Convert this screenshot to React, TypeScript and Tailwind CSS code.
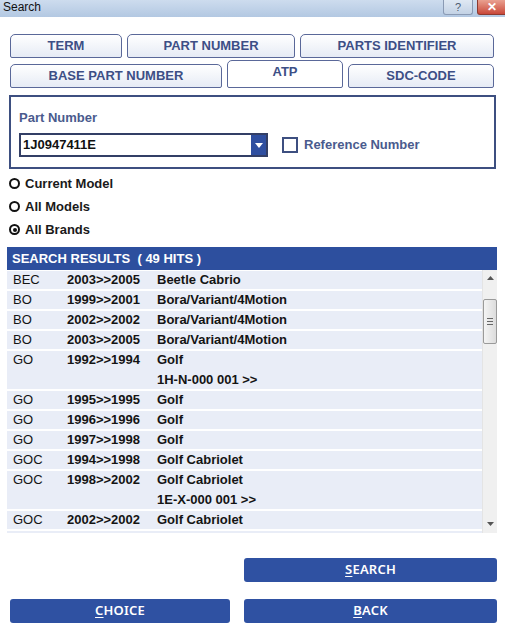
import React from "react";

type Row = { code: string; years: string; name: string; extra?: string };

const rows: Row[] = [
  { code: "BEC", years: "2003>>2005", name: "Beetle Cabrio" },
  { code: "BO", years: "1999>>2001", name: "Bora/Variant/4Motion" },
  { code: "BO", years: "2002>>2002", name: "Bora/Variant/4Motion" },
  { code: "BO", years: "2003>>2005", name: "Bora/Variant/4Motion" },
  { code: "GO", years: "1992>>1994", name: "Golf", extra: "1H-N-000 001 >>" },
  { code: "GO", years: "1995>>1995", name: "Golf" },
  { code: "GO", years: "1996>>1996", name: "Golf" },
  { code: "GO", years: "1997>>1998", name: "Golf" },
  { code: "GOC", years: "1994>>1998", name: "Golf Cabriolet" },
  { code: "GOC", years: "1998>>2002", name: "Golf Cabriolet", extra: "1E-X-000 001 >>" },
  { code: "GOC", years: "2002>>2002", name: "Golf Cabriolet" },
];

function Tab({ label, w, active }: { label: string; w: string; active?: boolean }) {
  return (
    <div
      className={`${w} ${
        active ? "h-[28px] bg-white" : "h-[24px] bg-gradient-to-b from-white to-[#e6ebf5]"
      } flex items-center justify-center border border-[#5a6899] rounded-t-[5px] rounded-b-[2px] text-[13px] font-bold text-[#3d4f86]`}
    >
      <span className={active ? "-mt-[4px]" : ""}>{label}</span>
    </div>
  );
}

function Radio({ label, checked }: { label: string; checked?: boolean }) {
  return (
    <div className="flex items-center h-[23px] pl-[9px]">
      <div className="w-[11px] h-[11px] rounded-full border-2 border-[#111] flex items-center justify-center bg-white">
        {checked && <div className="w-[4px] h-[4px] rounded-full bg-[#111]" />}
      </div>
      <span className="ml-[5px] text-[13px] font-bold text-[#1a1a1a]">{label}</span>
    </div>
  );
}

function Btn({ first, rest, w }: { first: string; rest: string; w: string }) {
  return (
    <div
      className={`${w} h-[24px] rounded-[3px] bg-[#2f51a2] flex items-center justify-center text-white text-[13px] font-semibold tracking-[0.2px]`}
      style={{ fontFamily: '"Noto Sans", "Open Sans", sans-serif' }}
    >
      <span className="underline underline-offset-[2px] decoration-[1px]">{first}</span>
      <span>{rest}</span>
    </div>
  );
}

export default function App() {
  return (
    <div
      className="w-[505px] h-[629px] bg-white overflow-hidden relative"
      style={{ fontFamily: '"Liberation Sans", Arial, sans-serif' }}
    >
      {/* title bar */}
      <div className="h-[17px] bg-gradient-to-b from-[#cddcee] to-[#b3c8e2] flex items-start relative">
        <span className="ml-[3px] text-[12px] text-[#111] leading-[15px]">Search</span>
        <div className="absolute left-[443px] top-0 w-[30px] h-[15px] rounded-b-[3px] border border-t-0 border-[#8a9ab4] bg-gradient-to-b from-[#dfe8f3] to-[#c3d2e5] flex items-center justify-center text-[11px] text-[#4a5a70] leading-none">
          ?
        </div>
        <div className="absolute left-[477px] top-0 w-[30px] h-[15px] rounded-b-[3px] border border-t-0 border-[#8c3a30] bg-gradient-to-b from-[#e9a090] to-[#c8473a] flex items-center justify-center text-[12px] font-bold text-white leading-none">
          ✕
        </div>
      </div>

      {/* tabs */}
      <div className="mt-[17px] pl-[10px] flex flex-col">
        <div className="flex gap-[5px] items-end">
          <Tab label="TERM" w="w-[112px]" />
          <Tab label="PART NUMBER" w="w-[168px]" />
          <Tab label="PARTS IDENTIFIER" w="w-[194px]" />
        </div>
        <div className="flex gap-[5px] items-end mt-[2px]">
          <Tab label="BASE PART NUMBER" w="w-[212px]" />
          <Tab label="ATP" w="w-[116px]" active />
          <Tab label="SDC-CODE" w="w-[146px]" />
        </div>
      </div>

      {/* part number panel */}
      <div className="ml-[9px] mt-[7px] w-[487px] h-[74px] border-2 border-[#3d4f80] pl-[8px] pt-[13px]">
        <div className="text-[13px] font-bold text-[#4a5b8e] leading-[15px]">Part Number</div>
        <div className="flex items-center mt-[8px]">
          <div className="w-[249px] h-[24px] border-2 border-[#333f66] flex items-center bg-white">
            <span className="flex-1 pl-[2px] text-[13px] font-bold text-[#111]">1J0947411E</span>
            <div className="w-[15px] h-[20px] bg-[#2f4fa0] flex items-center justify-center">
              <svg width="8" height="5" viewBox="0 0 8 5">
                <path d="M0 0 H8 L4 5 Z" fill="#ffffff" />
              </svg>
            </div>
          </div>
          <div className="ml-[14px] w-[16px] h-[16px] border-2 border-[#3d4f80] bg-white" />
          <span className="ml-[6px] text-[13px] font-bold text-[#4a5b8e]">Reference Number</span>
        </div>
      </div>

      {/* scope */}
      <div className="mt-[3px] flex flex-col">
        <Radio label="Current Model" />
        <Radio label="All Models" />
        <Radio label="All Brands" checked />
      </div>

      {/* results */}
      <div className="ml-[7px] mt-[6px] w-[490px]">
        <div className="h-[23px] bg-[#2d4f9e] flex items-center pl-[5px] text-[13px] font-bold text-white whitespace-pre">
          {"SEARCH RESULTS  ( 49 HITS )"}
        </div>
        <div className="flex h-[263px] overflow-hidden">
          <div className="w-[475px] flex flex-col gap-[2px] pt-[1px]">
            {rows.map((r, i) => (
              <div key={i} className="bg-[#e9edf7] flex text-[13px] text-[#141414] shrink-0">
                <div className="w-[60px] pl-[6px] leading-[18px]">{r.code}</div>
                <div className="w-[90px] font-bold leading-[18px]">{r.years}</div>
                <div className="flex flex-col font-bold">
                  <div className="leading-[18px]">{r.name}</div>
                  {r.extra && <div className="leading-[18px] mt-[2px]">{r.extra}</div>}
                </div>
              </div>
            ))}
            {/* next row peeking in at the bottom */}
            <div className="bg-[#e9edf7] h-[18px] shrink-0" />
          </div>
          {/* scrollbar */}
          <div className="w-[15px] bg-[#f0f0f0] border-l border-[#e4e4e4] relative">
            <div className="absolute left-[4px] top-[6px]">
              <svg width="7" height="4" viewBox="0 0 7 4">
                <path d="M0 4 L3.5 0 L7 4 Z" fill="#555" />
              </svg>
            </div>
            <div className="absolute left-[0px] top-[29px] w-[14px] h-[45px] rounded-[2px] border border-[#9a9a9a] bg-gradient-to-r from-[#f4f4f4] to-[#dcdcdc] flex flex-col items-center justify-center gap-[2px]">
              <div className="w-[6px] h-px bg-[#666]" />
              <div className="w-[6px] h-px bg-[#666]" />
              <div className="w-[6px] h-px bg-[#666]" />
            </div>
            <div className="absolute left-[4px] top-[252px]">
              <svg width="7" height="4" viewBox="0 0 7 4">
                <path d="M0 0 L7 0 L3.5 4 Z" fill="#555" />
              </svg>
            </div>
          </div>
        </div>
      </div>

      {/* actions */}
      <div className="mt-[25px] flex justify-end pr-[8px]">
        <Btn first="S" rest="EARCH" w="w-[253px]" />
      </div>
      <div className="mt-[17px] flex pl-[10px] gap-[14px]">
        <Btn first="C" rest="HOICE" w="w-[220px]" />
        <Btn first="B" rest="ACK" w="w-[253px]" />
      </div>
    </div>
  );
}
